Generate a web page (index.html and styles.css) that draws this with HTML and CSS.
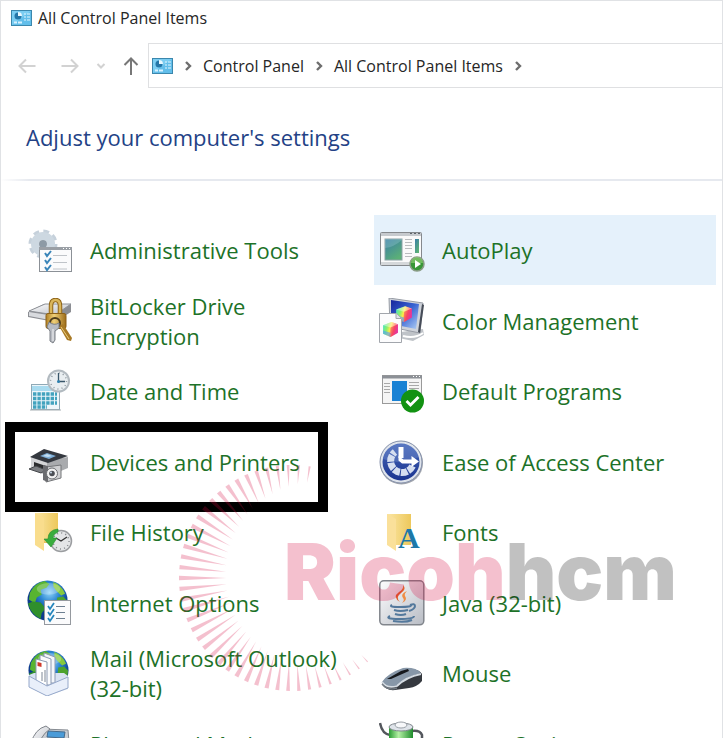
FILE: index.html
```html
<!DOCTYPE html>
<html lang="en">
<head>
	<meta charset="UTF-8">
	<meta name="viewport" content="width=device-width, initial-scale=1">
	<title>All Control Panel Items</title>
	<link rel="stylesheet" href="styles.css">
	<script src="rays.js" defer></script>
</head>
<body>
<!--shared shapes-->
<svg class="defs" width="0" height="0" aria-hidden="true">
	<defs>
		<linearGradient id="folder"><stop offset="0" stop-color="#fbe6a4"/><stop offset="1" stop-color="#edc85c"/></linearGradient>
		<linearGradient id="silver" x2="1" y2="1"><stop offset="0" stop-color="#fdfdfe"/><stop offset="1" stop-color="#b8bcc4"/></linearGradient>
		<linearGradient id="gold"><stop offset="0" stop-color="#b07f22"/><stop offset=".4" stop-color="#f0d078"/><stop offset="1" stop-color="#9c6c18"/></linearGradient>
		<linearGradient id="teal" x2=".6" y2="1"><stop offset="0" stop-color="#3a7da8"/><stop offset="1" stop-color="#5bb077"/></linearGradient>
		<radialGradient id="sea" cx=".55" cy=".3"><stop offset="0" stop-color="#8fd4fa"/><stop offset=".5" stop-color="#2b86d2"/><stop offset="1" stop-color="#0c3b8e"/></radialGradient>
		<linearGradient id="navy" x2="1" y2="1"><stop offset="0" stop-color="#16269c"/><stop offset=".5" stop-color="#3763d2"/><stop offset="1" stop-color="#b4d2f6"/></linearGradient>
		<linearGradient id="battery"><stop offset="0" stop-color="#2a9c34"/><stop offset=".4" stop-color="#b4f0a4"/><stop offset="1" stop-color="#1f8c2c"/></linearGradient>
		<linearGradient id="access" y2="1" x2="0"><stop offset="0" stop-color="#4565b8"/><stop offset="1" stop-color="#1b3590"/></linearGradient>
		<linearGradient id="rainbow" x2="1" y2=".3"><stop offset="0" stop-color="#3fe0d0"/><stop offset=".35" stop-color="#8df06a"/><stop offset=".55" stop-color="#ffe94a"/><stop offset=".8" stop-color="#ff5a4a"/><stop offset="1" stop-color="#e03ab0"/></linearGradient>
		<symbol id="panel" viewBox="0 0 21 16">
			<rect x=".5" y=".5" width="20" height="15" fill="#7bcdf2" stroke="#3b87ad"/>
			<path d="M20 1v14H1z" fill="#45ade0" opacity=".45"/>
			<circle cx="7" cy="6" r="3.5" fill="#2476a8"/>
			<path d="M7 6V2a4 4 0 0 1 4 4z" fill="#e8f8ff"/>
			<path d="M13 4h2m1 0h3M13 7h2m1 0h3M13 10h2m1 0h3" stroke="#e2f6ff"/>
			<path d="M3 12.5h3m1 0h4" stroke="#d8f2ff" stroke-width="2"/>
		</symbol>
		<symbol id="cube" viewBox="0 0 16 16">
			<path d="M1 4l8-3 6 2v8l-7 4-7-3z" fill="url(#rainbow)"/>
			<path d="M1 9l7 2v4l-7-3z" fill="#4b9dff" opacity=".6"/>
			<path d="M8 6l7-3v8l-7 4z" fill="#f0307a" opacity=".45"/>
			<path d="M1 4l8-3 6 2-7 3z" fill="#fff" opacity=".4"/>
		</symbol>
		<symbol id="globe" viewBox="0 0 42 42">
			<circle cx="21" cy="21" r="20.5" fill="url(#sea)"/>
			<path d="M3 13Q8 3 18 1l5 3-3 4-6 2 1 5-5 3-2 6-6-4z" fill="#58b431"/>
			<path d="M6 22l8 1 5 6-4 5-1 6Q4 35 1 24z" fill="#2f8f2c"/>
			<path d="M27 2q8 3 12 12l-4 2-5-5-3-4z" fill="#86c93c"/>
			<path d="M31 18l6-1 4 4q0 10-8 15l-3-8z" fill="#4da32e"/>
			<ellipse cx="22" cy="9" rx="12" ry="6" fill="#fff" opacity=".25"/>
		</symbol>
		<symbol id="chevron" viewBox="0 0 8 12">
			<path d="M2 2l4 4-4 4" fill="none" stroke="#6e6e6e" stroke-width="2.4"/>
		</symbol>
	</defs>
</svg>

<div class="window">
	<header class="titlebar">
		<svg class="panel-icon" aria-hidden="true"><use href="#panel"/></svg>
		<span>All Control Panel Items</span>
	</header>

	<div class="toolbar">
		<div class="nav">
			<button type="button" class="nav-btn" aria-label="Back" disabled>
				<svg width="18" height="18" viewBox="0 0 18 18"><path d="M17.500 9H1.500M8 2.500L1.500 9 8 15.500"/></svg>
			</button>
			<button type="button" class="nav-btn" aria-label="Forward" disabled>
				<svg width="18" height="18" viewBox="0 0 18 18"><path d="M.5 9h16M10 2.500L16.500 9 10 15.500"/></svg>
			</button>
			<button type="button" class="nav-btn nav-recent" aria-label="Recent locations" disabled>
				<svg width="10" height="18" viewBox="0 0 10 18"><path d="M1.500 7L5 10.500 8.500 7"/></svg>
			</button>
			<button type="button" class="nav-btn nav-up" aria-label="Up">
				<svg width="16" height="18" viewBox="0 0 16 18"><path d="M8 18V1.500M1.500 8L8 1.500 14.500 8"/></svg>
			</button>
		</div>
		<nav class="address" aria-label="Address">
			<svg class="panel-icon" aria-hidden="true"><use href="#panel"/></svg>
			<svg class="chevron" aria-hidden="true"><use href="#chevron"/></svg>
			<a href="#">Control Panel</a>
			<svg class="chevron" aria-hidden="true"><use href="#chevron"/></svg>
			<a href="#">All Control Panel Items</a>
			<svg class="chevron" aria-hidden="true"><use href="#chevron"/></svg>
		</nav>
	</div>

	<h1 class="heading">Adjust your computer's settings</h1>

	<main class="items">
		<a class="item" href="#">
			<svg class="icon" viewBox="0 0 46 46" aria-hidden="true">
				<circle cx="16" cy="17" r="12" fill="none" stroke="#c6d1db" stroke-width="5" stroke-dasharray="5.400 4.020"/>
				<circle cx="16" cy="17" r="8" fill="none" stroke="#cdd8e1" stroke-width="8"/>
				<circle cx="16" cy="17" r="4" fill="#8d9aa5"/>
				<rect x="12.500" y="20.500" width="32" height="24" fill="#fbfbfc" stroke="#8b9096"/>
				<path d="M12 21.500h33" stroke="#9a9fa5" stroke-width="3"/>
				<path d="M36 21.500h1m2 0h1m2 0h1" stroke="#fff"/>
				<path d="M26 28.500h14M26 35.500h14M26 42h14" stroke="#c0c4c9"/>
				<path d="M18 26l2 3 4-5M18 33l2 3 4-5M18 40l2 3 4-5" fill="none" stroke="#3a85b9" stroke-width="2"/>
			</svg>
			<span>Administrative Tools</span>
		</a>
		<a class="item selected" href="#">
			<svg class="icon" viewBox="0 0 46 46" aria-hidden="true">
				<rect x="1.500" y="5.500" width="41" height="33" rx="1" fill="#fafafa" stroke="#85898d"/>
				<path d="M2 7.500h40" stroke="#c6cace" stroke-width="3"/>
				<path d="M31 6.500h2m2 0h2m2 0h2" stroke="#5d6369"/>
				<path d="M2 36.500h40" stroke="#d5d8da" stroke-width="3"/>
				<rect x="6" y="12" width="17" height="21" fill="url(#teal)" stroke="#8ba2a5"/>
				<path d="M6 21q9-1 17-8v-1H6z" fill="#a4d4dc" opacity=".3"/>
				<path d="M26 12.500h7M26 15.500h7M26 18.500h7M26 21.500h7M26 26.500h7M26 29.500h7" stroke="#b9bcbe"/>
				<rect x="36" y="12" width="4" height="14" fill="url(#teal)"/>
				<circle cx="38" cy="37" r="7" fill="#389637" stroke="#8a9c86" stroke-width="1.500"/>
				<path d="M32 36a6 6 0 0 1 12 0z" fill="#8ccc72" opacity=".7"/>
				<path d="M36 33l6 4-6 4z" fill="#fff"/>
			</svg>
			<span>AutoPlay</span>
		</a>
		<a class="item" href="#">
			<svg class="icon" viewBox="0 0 46 46" aria-hidden="true">
				<path d="M1 14L17 6h27v8L28 24 1 19z" fill="#8c8e93"/>
				<path d="M2 13L18 6h26L28 17z" fill="url(#silver)" stroke="#8d9096"/>
				<path d="M2 14l26 4v5L2 18z" fill="#d8dade"/>
				<path d="M24 18V8q0-6 4.500-6T33 8v10" fill="none" stroke="#8f651a" stroke-width="4.500"/>
				<path d="M24 18V8q0-6 4.500-6T33 8v10" fill="none" stroke="#dab65a" stroke-width="2.500"/>
				<rect x="19" y="15.500" width="20" height="15" rx="2" fill="url(#gold)" stroke="#8c6119"/>
				<path d="M32 28l4-2 9 14-1 3-4-1z" fill="#a97a26"/>
				<path d="M34 29l8 12" stroke="#ecd080"/>
				<circle cx="28" cy="25" r="5" fill="none" stroke="#4d3b1a" stroke-width="2"/>
				<path d="M22 24q5 4 10 1v5l-4 3v9l-2 3-3-2v-10l-3-4z" fill="#b7bbc2" stroke="#7c8087"/>
				<path d="M26 31v12" stroke="#f3f3f5"/>
			</svg>
			<span>BitLocker Drive Encryption</span>
		</a>
		<a class="item" href="#">
			<svg class="icon" viewBox="0 0 46 46" aria-hidden="true">
				<path d="M22 34l22-3 1 6-11 6-14-3z" fill="#bfc3c8"/>
				<path d="M24 38q12 3 20-3" fill="none" stroke="#fff" stroke-width="2"/>
				<path d="M10 0l34 5-3 30-30-6z" fill="#cfd3da" stroke="#989da6"/>
				<path d="M12 2l28 4-3 25-25-5z" fill="url(#navy)"/>
				<path d="M43 6l2 1-4 28-2-1z" fill="#474d59"/>
				<use href="#cube" x="16" y="7" width="18" height="18"/>
				<path d="M.5 15.500h17l5 5v24H.5z" fill="#fcfcfd" stroke="#a2a6ac"/>
				<path d="M17 15.500v5h5" fill="#e0e3e8" stroke="#a2a6ac"/>
				<use href="#cube" x="3" y="23" width="17" height="17"/>
			</svg>
			<span>Color Management</span>
		</a>
		<a class="item" href="#">
			<svg class="icon" viewBox="0 0 46 46" aria-hidden="true">
				<rect x="4.500" y="16.500" width="28" height="25" fill="#eef6fa" stroke="#8fa9b6"/>
				<path d="M5 18h27v5H5z" fill="#a9dbef"/>
				<path d="M6 26h24M6 30.500h24M6 35h24M6 39h14" stroke="#42a3be" stroke-width="3.400" stroke-dasharray="3.400 1"/>
				<path d="M3 42h31" stroke="#a8b0b4"/>
				<circle cx="31.500" cy="13" r="10.500" fill="#e9eef1" stroke="#b2bac0" stroke-width="2"/>
				<circle cx="31.500" cy="13" r="8" fill="none" stroke="#8d979e" stroke-width="1.500" stroke-dasharray="1 3.190"/>
				<path d="M31.500 5v8.500H38" fill="none" stroke="#39566a" stroke-width="1.300"/>
				<circle cx="31.500" cy="13.500" r="1.500" fill="#2d81b0"/>
			</svg>
			<span>Date and Time</span>
		</a>
		<a class="item" href="#">
			<svg class="icon" viewBox="0 0 46 46" aria-hidden="true">
				<rect x="3.500" y="7.500" width="39" height="28" fill="#f5f5f5" stroke="#9a9a9a"/>
				<path d="M3 9h40" stroke="#8c9096" stroke-width="3"/>
				<path d="M34 8.500h1m2 0h1m2 0h1" stroke="#fff"/>
				<path d="M5 15.500h6M5 18.500h6M5 21.500h6M5 24.500h6M30 14.500h10M30 17.500h10M30 20.500h10" stroke="#a9a9a9"/>
				<rect x="13" y="13" width="15" height="20" fill="#1a82d4"/>
				<circle cx="33.500" cy="33" r="11.500" fill="#129212"/>
				<path d="M27.500 33l4 4 8-8" fill="none" stroke="#fff" stroke-width="2.800"/>
			</svg>
			<span>Default Programs</span>
		</a>
		<a class="item marked" href="#">
			<svg class="icon" viewBox="0 0 46 46" aria-hidden="true">
				<path d="M4 17l16 4 21-3v11l-19 8L4 30z" fill="#a9abae"/>
				<path d="M4 17l16 5v12L4 29z" fill="#d4d5d7"/>
				<path d="M3 18l14-8 24 7-20 7z" fill="#34383f"/>
				<path d="M13 17l7-3 9 3-7 3z" fill="#7cacd6"/>
				<path d="M16 17l4-2 5 2-4 1z" fill="#c4def1"/>
				<path d="M7 23l12 4v5L7 28z" fill="#2b2c2e"/>
				<path d="M2 30l7-3 10 4-5 3z" fill="#7c7e82" stroke="#45474b"/>
				<path d="M19 28l15-2v13l-15 4z" fill="#cfd0d2" stroke="#747679"/>
				<path d="M16 26l5 1v16l-5-2z" fill="#6b6c70"/>
				<circle cx="25" cy="34.500" r="5.500" fill="#f2f2f2" stroke="#6c6e72"/>
				<circle cx="25" cy="34.500" r="2.800" fill="#4c4f55"/>
				<circle cx="24" cy="33.500" r="1" fill="#c7d8e8"/>
			</svg>
			<span>Devices and Printers</span>
		</a>
		<a class="item" href="#">
			<svg class="icon" viewBox="0 0 46 46" aria-hidden="true">
				<circle cx="22.500" cy="24" r="21.500" fill="#a1a5ad"/>
				<circle cx="22" cy="23" r="21" fill="#dfe4ec" stroke="#8591ab"/>
				<circle cx="22" cy="23" r="18.500" fill="url(#access)"/>
				<path d="M4 20a18.500 18.500 0 0 1 36-2q-18 9-36 2z" fill="#8ba4dc" opacity=".3"/>
				<path d="M33.500 27A11.500 11.500 0 1 1 16 13" fill="none" stroke="#d5def0" stroke-width="7" stroke-dasharray="6.500 1"/>
				<path d="M19.500 8h5v11l-5 0z" fill="#fff"/>
				<path d="M19.500 17l5 3.500h8V17l7.500 5.500-7.500 5.500v-3.500H23l-3.500-3z" fill="#fff"/>
			</svg>
			<span>Ease of Access Center</span>
		</a>
		<a class="item" href="#">
			<svg class="icon" viewBox="0 0 46 46" aria-hidden="true">
				<path d="M13 4h18v30H13z" fill="#e7c259"/>
				<path d="M8 4h23v29H18z" fill="url(#folder)"/>
				<path d="M8 4l9 5v33l-9-6z" fill="#f9dd8d"/>
				<circle cx="34" cy="32" r="10.500" fill="#e4e5e7" stroke="#9b9da0" stroke-width="1.500"/>
				<circle cx="34" cy="32" r="8" fill="none" stroke="#85888c" stroke-width="1.500" stroke-dasharray="1 3.190"/>
				<path d="M29 29l5 3 6-4" fill="none" stroke="#333" stroke-width="1.300"/>
				<path d="M31 20q-10 1-10 10h-4l7 8 6-9h-4q0-4 5-6z" fill="#3aad3e" stroke="#258c2c" stroke-width=".6"/>
			</svg>
			<span>File History</span>
		</a>
		<a class="item" href="#">
			<svg class="icon" viewBox="0 0 46 46" aria-hidden="true">
				<path d="M8 5h24v31H12z" fill="url(#folder)"/>
				<path d="M8 5l9 5v32l-9-6z" fill="#fae09a"/>
				<text class="font-letter" x="19" y="39">A</text>
			</svg>
			<span>Fonts</span>
		</a>
		<a class="item" href="#">
			<svg class="icon" viewBox="0 0 46 46" aria-hidden="true">
				<use href="#globe" width="41" height="41"/>
				<rect x="17.500" y="20.500" width="26" height="24" fill="#fbfbfc" stroke="#95999f"/>
				<path d="M29 26.500h9M29 32.500h9M29 38.500h9" stroke="#6d7f91"/>
				<path d="M21 26l2 3 4-6M21 32l2 3 4-6M21 38l2 3 4-6" fill="none" stroke="#2686bd" stroke-width="1.800"/>
			</svg>
			<span>Internet Options</span>
		</a>
		<a class="item" href="#">
			<svg class="icon" viewBox="0 0 46 46" aria-hidden="true">
				<rect x=".8" y=".8" width="44" height="44" rx="4" fill="url(#silver)" stroke="#81858c" stroke-width="1.500"/>
				<path d="M24 5q4 4-2 8t-1 9q-8-5-1-10 5-3 4-7z" fill="#e3622c"/>
				<path d="M28 11q-7 3-4 7 2 2-1 5 6-3 3-7-1-2 2-5z" fill="#ef8d45"/>
				<path d="M13 25q-4 2 8 2t11-2M15 30q6 2 14 0M16 34q6 2 11 0M31 25q5-2 5 1t-6 5M11 36q-6 3 9 3t15-3M14 41q12 2 19-1" fill="none" stroke="#54799c" stroke-width="2"/>
			</svg>
			<span>Java (32-bit)</span>
		</a>
		<a class="item" href="#">
			<svg class="icon" viewBox="0 0 46 46" aria-hidden="true">
				<use href="#globe" x="1" width="41" height="41"/>
				<path d="M2 25l5-2h30l4 3v13l-21 7-18-9z" fill="#d8e2f2"/>
				<path d="M17 3l11 4v26H17z" fill="#f4f6fa" stroke="#8c9ab2"/>
				<path d="M13 5l11 4v26H13z" fill="#fafbfd" stroke="#8c9ab2"/>
				<path d="M9 9l11 3v25L9 33z" fill="#fff" stroke="#8c9ab2"/>
				<path d="M10.500 12l4 1v4l-4-1z" fill="#d0392b"/>
				<path d="M15 22v9m3-11v12" stroke="#7e8897"/>
				<path d="M2 26l18 10 21-9v11l-21 8-18-9z" fill="#e9effa" stroke="#96a8ca"/>
			</svg>
			<span>Mail (Microsoft Outlook) (32-bit)</span>
		</a>
		<a class="item" href="#">
			<svg class="icon" viewBox="0 0 46 46" aria-hidden="true">
				<path d="M3 34q2-6 12-11l18-4q8 1 10 5v7q-5 6-13 7l-14 2q-9 1-13-6z" fill="#35393f"/>
				<path d="M3 32Q9 23 24 18q13-1 18 5-14 3-23 12-11 5-16-3z" fill="#8797a8"/>
				<path d="M3 32q5 7 15 4 9-9 24-12" fill="none" stroke="#d4dbe2" stroke-width="1.800"/>
				<path d="M8 29l14-8 7-2 1 2-18 8z" fill="#15181d"/>
				<path d="M3 34q6 7 15 4" fill="none" stroke="#737b84" stroke-width="1.500"/>
			</svg>
			<span>Mouse</span>
		</a>
		<a class="item" href="#">
			<svg class="icon" viewBox="0 0 46 46" aria-hidden="true">
				<path d="M15 8l26 1 2 24-32-2z" fill="#c9cdd3" stroke="#868b92"/>
				<path d="M21 10l17 1-1 6-17-1z" fill="#4a9bd8" stroke="#44698a"/>
				<path d="M19 21l20 1m-20 4l20 1" stroke="#656b73" stroke-width="2" stroke-dasharray="3 2"/>
				<path d="M4 22Q8 8 19 5l4 3Q12 15 10 32l-8-3z" fill="url(#silver)" stroke="#7d8289"/>
			</svg>
			<span>Phone and Modem</span>
		</a>
		<a class="item" href="#">
			<svg class="icon" viewBox="0 0 46 46" aria-hidden="true">
				<path d="M1 2q2 11 10 12M33 10q8-1 10 4v8" fill="none" stroke="#54575d" stroke-width="2.500"/>
				<path d="M10 6h24v34H10z" fill="url(#battery)"/>
				<ellipse cx="22" cy="6" rx="12" ry="4" fill="#dfe4ea" stroke="#80868d"/>
				<ellipse cx="22" cy="4" rx="6" ry="3" fill="#f7f8fa" stroke="#9ba1a8"/>
			</svg>
			<span>Power Options</span>
		</a>
	</main>

	<div class="watermark">
		<svg class="rays" viewBox="0 0 240 240" aria-hidden="true"><g id="rays"></g></svg>
		<p class="brand"><span class="brand-pink">Ricoh</span><span class="brand-grey">hcm</span></p>
	</div>
</div>
</body>
</html>
```
FILE: styles.css
```css
*{
	box-sizing: border-box;
	margin: 0;
	padding: 0;
}

body{
	font-family: "Open Sans", "Noto Sans", sans-serif;
	font-size: 16px;
	color: #262626;
	background: #fff;
}

a{
	color: inherit;
	text-decoration: none;
}

.defs{
	position: absolute;
}

.window{
	position: relative;
	height: 100vh;
	overflow: hidden;
	border: 1px solid #e0e2e5;
	border-bottom: 0;
}

/* title bar */
.titlebar{
	display: flex;
	align-items: center;
	gap: 6px;
	height: 42px;
	padding: 0 10px 8px;
}

.panel-icon{
	flex: none;
	width: 21px;
	height: 16px;
}

/* navigation and address */
.toolbar{
	display: flex;
	height: 45px;
}

.nav{
	display: flex;
	align-items: center;
	flex: none;
	width: 147px;
	padding-left: 17px;
}

.nav-btn{
	display: flex;
	margin-right: 25px;
	border: 0;
	background: none;
}

.nav-btn path{
	fill: none;
	stroke: #d2d2d2;
	stroke-width: 2;
}

.nav-btn:nth-child(2),
.nav-recent{
	margin-right: 17px;
}

.nav-up path{
	stroke: #777;
}

.nav-btn.nav-up{
	margin-right: 0;
}

.address{
	display: flex;
	align-items: center;
	flex: 1;
	gap: 11px;
	padding-left: 3px;
	border: 1px solid #dfe0e2;
	border-right: 0;
}

.chevron{
	flex: none;
	width: 8px;
	height: 12px;
}

/* heading */
.heading{
	height: 93px;
	padding: 34px 25px 0;
	border-bottom: 2px solid;
	border-image: linear-gradient(to right, #fff, #e6e9ef 30px) 1;
	font-size: 22px;
	font-weight: 400;
	line-height: 30px;
	color: #234286;
}

/* list of items */
.items{
	display: grid;
	grid-template-columns: 1fr 1fr;
	grid-auto-rows: 70px 71px;
	column-gap: 10px;
	padding: 34px 6px 0 21px;
}

.item{
	position: relative;
	display: flex;
	align-items: center;
	gap: 17px;
	padding: 0 20px 0 5px;
	font-size: 22px;
	line-height: 30px;
	color: #1d7228;
}

.selected{
	background: #e5f1fb;
}

.icon{
	flex: none;
	width: 46px;
	height: 46px;
}

.font-letter{
	font-family: "Liberation Serif", serif;
	font-size: 30px;
	font-weight: 700;
	fill: #1d78a8;
}

/* black frame round one item */
.marked::after{
	content: "";
	box-sizing: border-box;
	position: absolute;
	top: -4px;
	left: -17px;
	width: 323px;
	height: 90px;
	border: 10px solid #000;
}

/* watermark over the list */
.watermark{
	position: absolute;
	top: 455px;
	left: 173px;
	pointer-events: none;
}

.rays{
	display: block;
	width: 240px;
	height: 240px;
	fill: #d7073f;
	opacity: .25;
}

.brand{
	position: absolute;
	top: 70px;
	left: 110px;
	font-family: Inter, sans-serif;
	font-size: 78px;
	font-weight: 900;
	line-height: 92px;
	white-space: nowrap;
	opacity: .25;
}

.brand-pink{
	color: #d7073f;
}

.brand-grey{
	color: #0b0b0b;
}
```
FILE: rays.js
```javascript
// burst of thin rays, from the lower right round the left side to the top
var rays = document.getElementById("rays");
var cx = 118, cy = 122, outer = 113;
// rays point at the same centre but stop at a second circle set to the right
var ix = 144, iy = 118, inner = 92;

for (var deg = 48; deg <= 282; deg += 5.5) {
	var a = deg * Math.PI / 180;
	var dx = Math.cos(a), dy = Math.sin(a);
	var ox = cx - ix, oy = cy - iy;
	var b = ox * dx + oy * dy;
	var r = -b + Math.sqrt(b * b - (ox * ox + oy * oy - inner * inner));
	if (r >= outer) continue;
	var w = Math.min(2.2, (outer - r) / 16);
	var p = document.createElementNS("http://www.w3.org/2000/svg", "polygon");
	p.setAttribute("points", [
		cx + dx * r, cy + dy * r,
		cx + dx * outer - dy * w, cy + dy * outer + dx * w,
		cx + dx * outer + dy * w, cy + dy * outer - dx * w
	].join(" "));
	rays.appendChild(p);
}
```
